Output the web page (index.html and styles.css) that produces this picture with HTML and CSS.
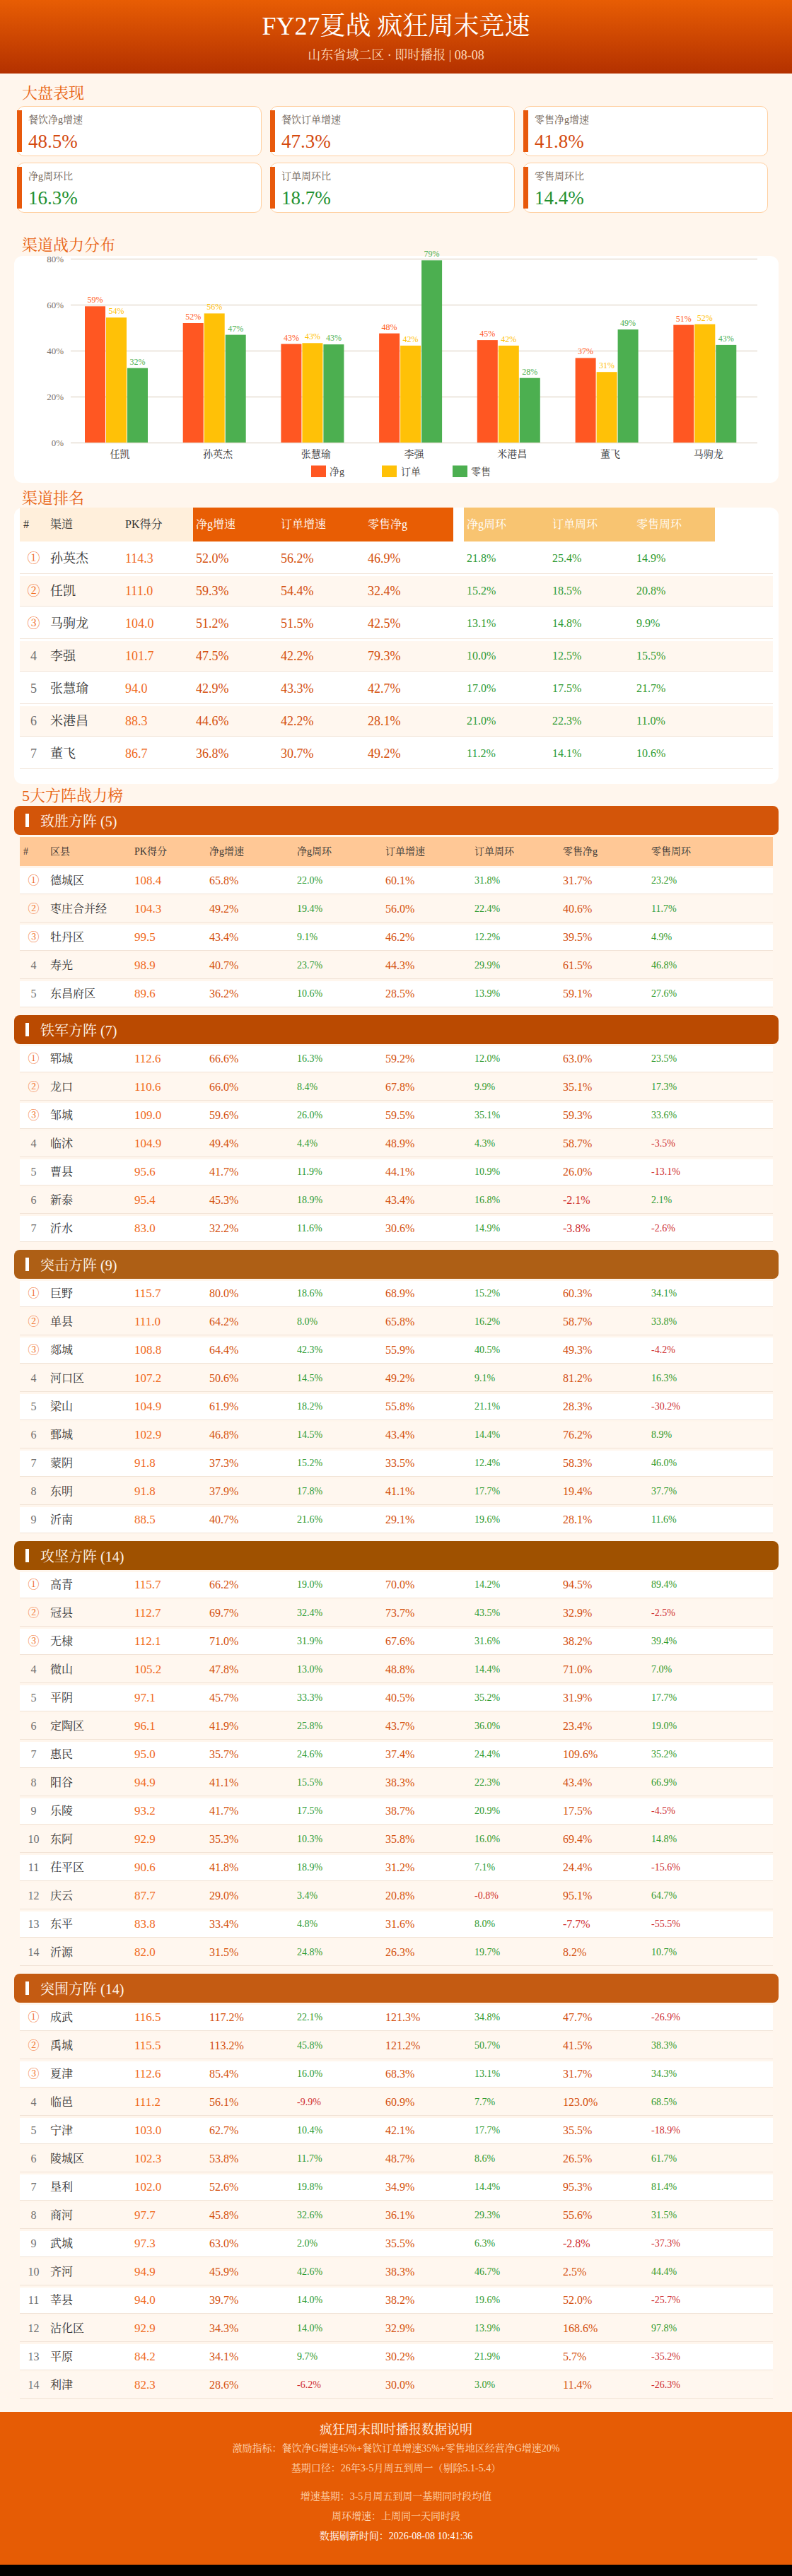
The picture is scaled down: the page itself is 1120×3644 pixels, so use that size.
FILE: index.html
```html
<!DOCTYPE html>
<html lang="zh-CN">
<head>
<meta charset="utf-8">
<title>FY27夏战 疯狂周末竞速</title>
<link rel="stylesheet" href="styles.css">
</head>
<body>
<header class="hero">
  <h1 class="hero-title">FY27夏战 疯狂周末竞速</h1>
  <p class="hero-sub">山东省域二区 · 即时播报 | 08-08</p>
</header>

<main class="page">
  <section class="overview">
    <h2 class="section-title">大盘表现</h2>
    <div class="stats">
      <div class="stat"><span class="stat-bar"></span><div class="stat-body"><div class="stat-label">餐饮净g增速</div><div class="stat-value">48.5%</div></div></div>
      <div class="stat"><span class="stat-bar"></span><div class="stat-body"><div class="stat-label">餐饮订单增速</div><div class="stat-value">47.3%</div></div></div>
      <div class="stat"><span class="stat-bar"></span><div class="stat-body"><div class="stat-label">零售净g增速</div><div class="stat-value">41.8%</div></div></div>
      <div class="stat"><span class="stat-bar"></span><div class="stat-body"><div class="stat-label">净g周环比</div><div class="stat-value is-green">16.3%</div></div></div>
      <div class="stat"><span class="stat-bar"></span><div class="stat-body"><div class="stat-label">订单周环比</div><div class="stat-value is-green">18.7%</div></div></div>
      <div class="stat"><span class="stat-bar"></span><div class="stat-body"><div class="stat-label">零售周环比</div><div class="stat-value is-green">14.4%</div></div></div>
    </div>
  </section>

  <section class="chart-sec">
    <h2 class="section-title">渠道战力分布</h2>
    <div class="chart-card">
      <svg class="chart-svg" width="1081" height="321" viewBox="0 0 1081 321">
        <g class="grid">
          <line x1="80" x2="1051" y1="4.5" y2="4.5"/>
          <line x1="80" x2="1051" y1="69.5" y2="69.5"/>
          <line x1="80" x2="1051" y1="134.5" y2="134.5"/>
          <line x1="80" x2="1051" y1="199.5" y2="199.5"/>
          <line x1="80" x2="1051" y1="264.5" y2="264.5"/>
        </g>
        <g class="ylab">
          <text x="70" y="9">80%</text>
          <text x="70" y="74">60%</text>
          <text x="70" y="139">40%</text>
          <text x="70" y="204">20%</text>
          <text x="70" y="269">0%</text>
        </g>
        <g class="bar-r">
          <rect x="100" y="71.3" width="29" height="192.7"/>
          <rect x="238.7" y="95" width="29" height="169"/>
          <rect x="377.4" y="124.6" width="29" height="139.4"/>
          <rect x="516.1" y="109.6" width="29" height="154.4"/>
          <rect x="654.8" y="119.1" width="29" height="144.9"/>
          <rect x="793.6" y="144.4" width="29" height="119.6"/>
          <rect x="932.3" y="97.6" width="29" height="166.4"/>
        </g>
        <g class="bar-y">
          <rect x="130" y="87.2" width="29" height="176.8"/>
          <rect x="268.7" y="81.4" width="29" height="182.6"/>
          <rect x="407.4" y="123.3" width="29" height="140.7"/>
          <rect x="546.1" y="126.9" width="29" height="137.1"/>
          <rect x="684.8" y="126.9" width="29" height="137.1"/>
          <rect x="823.6" y="164.2" width="29" height="99.8"/>
          <rect x="962.3" y="96.6" width="29" height="167.4"/>
        </g>
        <g class="bar-g">
          <rect x="160" y="158.7" width="29" height="105.3"/>
          <rect x="298.7" y="111.6" width="29" height="152.4"/>
          <rect x="437.4" y="125.2" width="29" height="138.8"/>
          <rect x="576.1" y="6.3" width="29" height="257.7"/>
          <rect x="714.8" y="172.7" width="29" height="91.3"/>
          <rect x="853.6" y="104.1" width="29" height="159.9"/>
          <rect x="992.3" y="125.9" width="29" height="138.1"/>
        </g>
        <g class="vlab vlab-r">
          <text x="114.5" y="66.3">59%</text>
          <text x="253.2" y="90">52%</text>
          <text x="391.9" y="119.6">43%</text>
          <text x="530.6" y="104.6">48%</text>
          <text x="669.3" y="114.1">45%</text>
          <text x="808.1" y="139.4">37%</text>
          <text x="946.8" y="92.6">51%</text>
        </g>
        <g class="vlab vlab-y">
          <text x="144.5" y="82.2">54%</text>
          <text x="283.2" y="76.4">56%</text>
          <text x="421.9" y="118.3">43%</text>
          <text x="560.6" y="121.9">42%</text>
          <text x="699.3" y="121.9">42%</text>
          <text x="838.1" y="159.2">31%</text>
          <text x="976.8" y="91.6">52%</text>
        </g>
        <g class="vlab vlab-g">
          <text x="174.5" y="153.7">32%</text>
          <text x="313.2" y="106.6">47%</text>
          <text x="451.9" y="120.2">43%</text>
          <text x="590.6" y="1.3">79%</text>
          <text x="729.3" y="167.7">28%</text>
          <text x="868.1" y="99.1">49%</text>
          <text x="1006.8" y="120.9">43%</text>
        </g>
        <g class="xlab">
          <text x="149.4" y="285">任凯</text>
          <text x="288.1" y="285">孙英杰</text>
          <text x="426.8" y="285">张慧瑜</text>
          <text x="565.5" y="285">李强</text>
          <text x="704.2" y="285">米港昌</text>
          <text x="843" y="285">董飞</text>
          <text x="981.7" y="285">马驹龙</text>
        </g>
        <g class="legend">
          <rect class="bar-r" x="420" y="296.5" width="21" height="16.5"/>
          <text x="446" y="310">净g</text>
          <rect class="bar-y" x="520" y="296.5" width="21" height="16.5"/>
          <text x="547" y="310">订单</text>
          <rect class="bar-g" x="620" y="296.5" width="21" height="16.5"/>
          <text x="646" y="310">零售</text>
        </g>
      </svg>
    </div>
  </section>

  <section class="rank-sec">
    <h2 class="section-title">渠道排名</h2>
    <div class="rank-card">
      <table class="rank-table">
        <colgroup>
          <col class="rc-rk"><col class="rc-nm"><col class="rc-pk"><col class="rc-g1"><col class="rc-g2"><col class="rc-g3"><col class="rc-sp"><col class="rc-w1"><col class="rc-w2"><col class="rc-w3"><col>
        </colgroup>
        <thead>
          <tr>
            <th class="h-base h-rk">#</th><th class="h-base">渠道</th><th class="h-base">PK得分</th>
            <th class="h-grow">净g增速</th><th class="h-grow">订单增速</th><th class="h-grow">零售净g</th>
            <th></th>
            <th class="h-week">净g周环</th><th class="h-week">订单周环</th><th class="h-week">零售周环</th>
            <th></th>
          </tr>
        </thead>
        <tbody>
          <tr><td class="rk top">①</td><td class="nm">孙英杰</td><td class="pk">114.3</td><td class="g">52.0%</td><td class="g">56.2%</td><td class="g">46.9%</td><td></td><td class="w">21.8%</td><td class="w">25.4%</td><td class="w">14.9%</td><td></td></tr>
          <tr><td class="rk top">②</td><td class="nm">任凯</td><td class="pk">111.0</td><td class="g">59.3%</td><td class="g">54.4%</td><td class="g">32.4%</td><td></td><td class="w">15.2%</td><td class="w">18.5%</td><td class="w">20.8%</td><td></td></tr>
          <tr><td class="rk top">③</td><td class="nm">马驹龙</td><td class="pk">104.0</td><td class="g">51.2%</td><td class="g">51.5%</td><td class="g">42.5%</td><td></td><td class="w">13.1%</td><td class="w">14.8%</td><td class="w">9.9%</td><td></td></tr>
          <tr><td class="rk">4</td><td class="nm">李强</td><td class="pk">101.7</td><td class="g">47.5%</td><td class="g">42.2%</td><td class="g">79.3%</td><td></td><td class="w">10.0%</td><td class="w">12.5%</td><td class="w">15.5%</td><td></td></tr>
          <tr><td class="rk">5</td><td class="nm">张慧瑜</td><td class="pk">94.0</td><td class="g">42.9%</td><td class="g">43.3%</td><td class="g">42.7%</td><td></td><td class="w">17.0%</td><td class="w">17.5%</td><td class="w">21.7%</td><td></td></tr>
          <tr><td class="rk">6</td><td class="nm">米港昌</td><td class="pk">88.3</td><td class="g">44.6%</td><td class="g">42.2%</td><td class="g">28.1%</td><td></td><td class="w">21.0%</td><td class="w">22.3%</td><td class="w">11.0%</td><td></td></tr>
          <tr><td class="rk">7</td><td class="nm">董飞</td><td class="pk">86.7</td><td class="g">36.8%</td><td class="g">30.7%</td><td class="g">49.2%</td><td></td><td class="w">11.2%</td><td class="w">14.1%</td><td class="w">10.6%</td><td></td></tr>
        </tbody>
      </table>
    </div>
  </section>

  <section class="groups-sec">
    <h2 class="section-title">5大方阵战力榜</h2>

    <div class="grp">
      <div class="grp-head grp--win"><span class="grp-mark"></span><span class="grp-name">致胜方阵 (5)</span></div>
      <table class="grp-table">
        <colgroup><col class="gc-rk"><col class="gc-nm"><col class="gc-pk"><col class="gc-v1"><col class="gc-v2"><col class="gc-v3"><col class="gc-v4"><col class="gc-v5"><col></colgroup>
        <thead>
          <tr><th class="h-rk">#</th><th>区县</th><th>PK得分</th><th>净g增速</th><th>净g周环</th><th>订单增速</th><th>订单周环</th><th>零售净g</th><th>零售周环</th></tr>
        </thead>
        <tbody>
          <tr><td class="rk top">①</td><td class="nm">德城区</td><td class="pk">108.4</td><td class="g">65.8%</td><td class="w">22.0%</td><td class="g">60.1%</td><td class="w">31.8%</td><td class="g">31.7%</td><td class="w">23.2%</td></tr>
          <tr><td class="rk top">②</td><td class="nm">枣庄合并经</td><td class="pk">104.3</td><td class="g">49.2%</td><td class="w">19.4%</td><td class="g">56.0%</td><td class="w">22.4%</td><td class="g">40.6%</td><td class="w">11.7%</td></tr>
          <tr><td class="rk top">③</td><td class="nm">牡丹区</td><td class="pk">99.5</td><td class="g">43.4%</td><td class="w">9.1%</td><td class="g">46.2%</td><td class="w">12.2%</td><td class="g">39.5%</td><td class="w">4.9%</td></tr>
          <tr><td class="rk">4</td><td class="nm">寿光</td><td class="pk">98.9</td><td class="g">40.7%</td><td class="w">23.7%</td><td class="g">44.3%</td><td class="w">29.9%</td><td class="g">61.5%</td><td class="w">46.8%</td></tr>
          <tr><td class="rk">5</td><td class="nm">东昌府区</td><td class="pk">89.6</td><td class="g">36.2%</td><td class="w">10.6%</td><td class="g">28.5%</td><td class="w">13.9%</td><td class="g">59.1%</td><td class="w">27.6%</td></tr>
        </tbody>
      </table>
    </div>

    <div class="grp">
      <div class="grp-head grp--iron"><span class="grp-mark"></span><span class="grp-name">铁军方阵 (7)</span></div>
      <table class="grp-table">
        <colgroup><col class="gc-rk"><col class="gc-nm"><col class="gc-pk"><col class="gc-v1"><col class="gc-v2"><col class="gc-v3"><col class="gc-v4"><col class="gc-v5"><col></colgroup>
        <tbody>
          <tr><td class="rk top">①</td><td class="nm">郓城</td><td class="pk">112.6</td><td class="g">66.6%</td><td class="w">16.3%</td><td class="g">59.2%</td><td class="w">12.0%</td><td class="g">63.0%</td><td class="w">23.5%</td></tr>
          <tr><td class="rk top">②</td><td class="nm">龙口</td><td class="pk">110.6</td><td class="g">66.0%</td><td class="w">8.4%</td><td class="g">67.8%</td><td class="w">9.9%</td><td class="g">35.1%</td><td class="w">17.3%</td></tr>
          <tr><td class="rk top">③</td><td class="nm">邹城</td><td class="pk">109.0</td><td class="g">59.6%</td><td class="w">26.0%</td><td class="g">59.5%</td><td class="w">35.1%</td><td class="g">59.3%</td><td class="w">33.6%</td></tr>
          <tr><td class="rk">4</td><td class="nm">临沭</td><td class="pk">104.9</td><td class="g">49.4%</td><td class="w">4.4%</td><td class="g">48.9%</td><td class="w">4.3%</td><td class="g">58.7%</td><td class="w neg">-3.5%</td></tr>
          <tr><td class="rk">5</td><td class="nm">曹县</td><td class="pk">95.6</td><td class="g">41.7%</td><td class="w">11.9%</td><td class="g">44.1%</td><td class="w">10.9%</td><td class="g">26.0%</td><td class="w neg">-13.1%</td></tr>
          <tr><td class="rk">6</td><td class="nm">新泰</td><td class="pk">95.4</td><td class="g">45.3%</td><td class="w">18.9%</td><td class="g">43.4%</td><td class="w">16.8%</td><td class="g neg">-2.1%</td><td class="w">2.1%</td></tr>
          <tr><td class="rk">7</td><td class="nm">沂水</td><td class="pk">83.0</td><td class="g">32.2%</td><td class="w">11.6%</td><td class="g">30.6%</td><td class="w">14.9%</td><td class="g neg">-3.8%</td><td class="w neg">-2.6%</td></tr>
        </tbody>
      </table>
    </div>

    <div class="grp">
      <div class="grp-head grp--rush"><span class="grp-mark"></span><span class="grp-name">突击方阵 (9)</span></div>
      <table class="grp-table">
        <colgroup><col class="gc-rk"><col class="gc-nm"><col class="gc-pk"><col class="gc-v1"><col class="gc-v2"><col class="gc-v3"><col class="gc-v4"><col class="gc-v5"><col></colgroup>
        <tbody>
          <tr><td class="rk top">①</td><td class="nm">巨野</td><td class="pk">115.7</td><td class="g">80.0%</td><td class="w">18.6%</td><td class="g">68.9%</td><td class="w">15.2%</td><td class="g">60.3%</td><td class="w">34.1%</td></tr>
          <tr><td class="rk top">②</td><td class="nm">单县</td><td class="pk">111.0</td><td class="g">64.2%</td><td class="w">8.0%</td><td class="g">65.8%</td><td class="w">16.2%</td><td class="g">58.7%</td><td class="w">33.8%</td></tr>
          <tr><td class="rk top">③</td><td class="nm">郯城</td><td class="pk">108.8</td><td class="g">64.4%</td><td class="w">42.3%</td><td class="g">55.9%</td><td class="w">40.5%</td><td class="g">49.3%</td><td class="w neg">-4.2%</td></tr>
          <tr><td class="rk">4</td><td class="nm">河口区</td><td class="pk">107.2</td><td class="g">50.6%</td><td class="w">14.5%</td><td class="g">49.2%</td><td class="w">9.1%</td><td class="g">81.2%</td><td class="w">16.3%</td></tr>
          <tr><td class="rk">5</td><td class="nm">梁山</td><td class="pk">104.9</td><td class="g">61.9%</td><td class="w">18.2%</td><td class="g">55.8%</td><td class="w">21.1%</td><td class="g">28.3%</td><td class="w neg">-30.2%</td></tr>
          <tr><td class="rk">6</td><td class="nm">鄄城</td><td class="pk">102.9</td><td class="g">46.8%</td><td class="w">14.5%</td><td class="g">43.4%</td><td class="w">14.4%</td><td class="g">76.2%</td><td class="w">8.9%</td></tr>
          <tr><td class="rk">7</td><td class="nm">蒙阴</td><td class="pk">91.8</td><td class="g">37.3%</td><td class="w">15.2%</td><td class="g">33.5%</td><td class="w">12.4%</td><td class="g">58.3%</td><td class="w">46.0%</td></tr>
          <tr><td class="rk">8</td><td class="nm">东明</td><td class="pk">91.8</td><td class="g">37.9%</td><td class="w">17.8%</td><td class="g">41.1%</td><td class="w">17.7%</td><td class="g">19.4%</td><td class="w">37.7%</td></tr>
          <tr><td class="rk">9</td><td class="nm">沂南</td><td class="pk">88.5</td><td class="g">40.7%</td><td class="w">21.6%</td><td class="g">29.1%</td><td class="w">19.6%</td><td class="g">28.1%</td><td class="w">11.6%</td></tr>
        </tbody>
      </table>
    </div>

    <div class="grp">
      <div class="grp-head grp--storm"><span class="grp-mark"></span><span class="grp-name">攻坚方阵 (14)</span></div>
      <table class="grp-table">
        <colgroup><col class="gc-rk"><col class="gc-nm"><col class="gc-pk"><col class="gc-v1"><col class="gc-v2"><col class="gc-v3"><col class="gc-v4"><col class="gc-v5"><col></colgroup>
        <tbody>
          <tr><td class="rk top">①</td><td class="nm">高青</td><td class="pk">115.7</td><td class="g">66.2%</td><td class="w">19.0%</td><td class="g">70.0%</td><td class="w">14.2%</td><td class="g">94.5%</td><td class="w">89.4%</td></tr>
          <tr><td class="rk top">②</td><td class="nm">冠县</td><td class="pk">112.7</td><td class="g">69.7%</td><td class="w">32.4%</td><td class="g">73.7%</td><td class="w">43.5%</td><td class="g">32.9%</td><td class="w neg">-2.5%</td></tr>
          <tr><td class="rk top">③</td><td class="nm">无棣</td><td class="pk">112.1</td><td class="g">71.0%</td><td class="w">31.9%</td><td class="g">67.6%</td><td class="w">31.6%</td><td class="g">38.2%</td><td class="w">39.4%</td></tr>
          <tr><td class="rk">4</td><td class="nm">微山</td><td class="pk">105.2</td><td class="g">47.8%</td><td class="w">13.0%</td><td class="g">48.8%</td><td class="w">14.4%</td><td class="g">71.0%</td><td class="w">7.0%</td></tr>
          <tr><td class="rk">5</td><td class="nm">平阴</td><td class="pk">97.1</td><td class="g">45.7%</td><td class="w">33.3%</td><td class="g">40.5%</td><td class="w">35.2%</td><td class="g">31.9%</td><td class="w">17.7%</td></tr>
          <tr><td class="rk">6</td><td class="nm">定陶区</td><td class="pk">96.1</td><td class="g">41.9%</td><td class="w">25.8%</td><td class="g">43.7%</td><td class="w">36.0%</td><td class="g">23.4%</td><td class="w">19.0%</td></tr>
          <tr><td class="rk">7</td><td class="nm">惠民</td><td class="pk">95.0</td><td class="g">35.7%</td><td class="w">24.6%</td><td class="g">37.4%</td><td class="w">24.4%</td><td class="g">109.6%</td><td class="w">35.2%</td></tr>
          <tr><td class="rk">8</td><td class="nm">阳谷</td><td class="pk">94.9</td><td class="g">41.1%</td><td class="w">15.5%</td><td class="g">38.3%</td><td class="w">22.3%</td><td class="g">43.4%</td><td class="w">66.9%</td></tr>
          <tr><td class="rk">9</td><td class="nm">乐陵</td><td class="pk">93.2</td><td class="g">41.7%</td><td class="w">17.5%</td><td class="g">38.7%</td><td class="w">20.9%</td><td class="g">17.5%</td><td class="w neg">-4.5%</td></tr>
          <tr><td class="rk">10</td><td class="nm">东阿</td><td class="pk">92.9</td><td class="g">35.3%</td><td class="w">10.3%</td><td class="g">35.8%</td><td class="w">16.0%</td><td class="g">69.4%</td><td class="w">14.8%</td></tr>
          <tr><td class="rk">11</td><td class="nm">茌平区</td><td class="pk">90.6</td><td class="g">41.8%</td><td class="w">18.9%</td><td class="g">31.2%</td><td class="w">7.1%</td><td class="g">24.4%</td><td class="w neg">-15.6%</td></tr>
          <tr><td class="rk">12</td><td class="nm">庆云</td><td class="pk">87.7</td><td class="g">29.0%</td><td class="w">3.4%</td><td class="g">20.8%</td><td class="w neg">-0.8%</td><td class="g">95.1%</td><td class="w">64.7%</td></tr>
          <tr><td class="rk">13</td><td class="nm">东平</td><td class="pk">83.8</td><td class="g">33.4%</td><td class="w">4.8%</td><td class="g">31.6%</td><td class="w">8.0%</td><td class="g neg">-7.7%</td><td class="w neg">-55.5%</td></tr>
          <tr><td class="rk">14</td><td class="nm">沂源</td><td class="pk">82.0</td><td class="g">31.5%</td><td class="w">24.8%</td><td class="g">26.3%</td><td class="w">19.7%</td><td class="g">8.2%</td><td class="w">10.7%</td></tr>
        </tbody>
      </table>
    </div>

    <div class="grp">
      <div class="grp-head grp--break"><span class="grp-mark"></span><span class="grp-name">突围方阵 (14)</span></div>
      <table class="grp-table">
        <colgroup><col class="gc-rk"><col class="gc-nm"><col class="gc-pk"><col class="gc-v1"><col class="gc-v2"><col class="gc-v3"><col class="gc-v4"><col class="gc-v5"><col></colgroup>
        <tbody>
          <tr><td class="rk top">①</td><td class="nm">成武</td><td class="pk">116.5</td><td class="g">117.2%</td><td class="w">22.1%</td><td class="g">121.3%</td><td class="w">34.8%</td><td class="g">47.7%</td><td class="w neg">-26.9%</td></tr>
          <tr><td class="rk top">②</td><td class="nm">禹城</td><td class="pk">115.5</td><td class="g">113.2%</td><td class="w">45.8%</td><td class="g">121.2%</td><td class="w">50.7%</td><td class="g">41.5%</td><td class="w">38.3%</td></tr>
          <tr><td class="rk top">③</td><td class="nm">夏津</td><td class="pk">112.6</td><td class="g">85.4%</td><td class="w">16.0%</td><td class="g">68.3%</td><td class="w">13.1%</td><td class="g">31.7%</td><td class="w">34.3%</td></tr>
          <tr><td class="rk">4</td><td class="nm">临邑</td><td class="pk">111.2</td><td class="g">56.1%</td><td class="w neg">-9.9%</td><td class="g">60.9%</td><td class="w">7.7%</td><td class="g">123.0%</td><td class="w">68.5%</td></tr>
          <tr><td class="rk">5</td><td class="nm">宁津</td><td class="pk">103.0</td><td class="g">62.7%</td><td class="w">10.4%</td><td class="g">42.1%</td><td class="w">17.7%</td><td class="g">35.5%</td><td class="w neg">-18.9%</td></tr>
          <tr><td class="rk">6</td><td class="nm">陵城区</td><td class="pk">102.3</td><td class="g">53.8%</td><td class="w">11.7%</td><td class="g">48.7%</td><td class="w">8.6%</td><td class="g">26.5%</td><td class="w">61.7%</td></tr>
          <tr><td class="rk">7</td><td class="nm">垦利</td><td class="pk">102.0</td><td class="g">52.6%</td><td class="w">19.8%</td><td class="g">34.9%</td><td class="w">14.4%</td><td class="g">95.3%</td><td class="w">81.4%</td></tr>
          <tr><td class="rk">8</td><td class="nm">商河</td><td class="pk">97.7</td><td class="g">45.8%</td><td class="w">32.6%</td><td class="g">36.1%</td><td class="w">29.3%</td><td class="g">55.6%</td><td class="w">31.5%</td></tr>
          <tr><td class="rk">9</td><td class="nm">武城</td><td class="pk">97.3</td><td class="g">63.0%</td><td class="w">2.0%</td><td class="g">35.5%</td><td class="w">6.3%</td><td class="g neg">-2.8%</td><td class="w neg">-37.3%</td></tr>
          <tr><td class="rk">10</td><td class="nm">齐河</td><td class="pk">94.9</td><td class="g">45.9%</td><td class="w">42.6%</td><td class="g">38.3%</td><td class="w">46.7%</td><td class="g">2.5%</td><td class="w">44.4%</td></tr>
          <tr><td class="rk">11</td><td class="nm">莘县</td><td class="pk">94.0</td><td class="g">39.7%</td><td class="w">14.0%</td><td class="g">38.2%</td><td class="w">19.6%</td><td class="g">52.0%</td><td class="w neg">-25.7%</td></tr>
          <tr><td class="rk">12</td><td class="nm">沾化区</td><td class="pk">92.9</td><td class="g">34.3%</td><td class="w">14.0%</td><td class="g">32.9%</td><td class="w">13.9%</td><td class="g">168.6%</td><td class="w">97.8%</td></tr>
          <tr><td class="rk">13</td><td class="nm">平原</td><td class="pk">84.2</td><td class="g">34.1%</td><td class="w">9.7%</td><td class="g">30.2%</td><td class="w">21.9%</td><td class="g">5.7%</td><td class="w neg">-35.2%</td></tr>
          <tr><td class="rk">14</td><td class="nm">利津</td><td class="pk">82.3</td><td class="g">28.6%</td><td class="w neg">-6.2%</td><td class="g">30.0%</td><td class="w">3.0%</td><td class="g">11.4%</td><td class="w neg">-26.3%</td></tr>
        </tbody>
      </table>
    </div>
  </section>
</main>

<footer class="foot">
  <h3 class="foot-title">疯狂周末即时播报数据说明</h3>
  <p class="foot-line">激励指标：餐饮净G增速45%+餐饮订单增速35%+零售地区经营净G增速20%</p>
  <p class="foot-line">基期口径：26年3-5月周五到周一（剔除5.1-5.4）</p>
  <p class="foot-line foot-gap">增速基期：3-5月周五到周一基期同时段均值</p>
  <p class="foot-line">周环增速：上周同一天同时段</p>
  <p class="foot-line foot-time">数据刷新时间：2026-08-08 10:41:36</p>
</footer>
</body>
</html>
```

FILE: styles.css
```css
html {
  background: #000;
}

body {
  margin: 0;
  background: #fff6ed;
  color: #333;
  font-family: "Liberation Serif", "Noto Serif CJK SC", "Noto Serif SC", "Noto Sans CJK SC", serif;
}

/* ---------- hero ---------- */
.hero {
  height: 104px;
  box-sizing: border-box;
  padding-top: 17px;
  background: linear-gradient(180deg, #e85d04 0%, #b43100 100%);
  text-align: center;
}

.hero-title {
  margin: 0;
  font-size: 36px;
  line-height: 40px;
  font-weight: normal;
  color: #fff;
}

.hero-sub {
  margin: 9px 0 0;
  font-size: 18px;
  line-height: 24px;
  color: #ffdcbc;
}

/* ---------- page ---------- */
.page {
  padding: 0 19px 8px 20px;
}

.section-title {
  margin: 0;
  padding-left: 11px;
  font-size: 22px;
  line-height: 24px;
  font-weight: normal;
  color: #e8620f;
}

/* ---------- overview ---------- */
.overview {
  padding-top: 16px;
}

.overview .section-title {
  margin-bottom: 6px;
}

.stats {
  display: grid;
  grid-template-columns: repeat(3, 346px);
  column-gap: 12px;
  row-gap: 9px;
  margin-left: 4px;
}

.stat {
  display: flex;
  background: #fff;
  border: 1px solid #ffcf9f;
  border-radius: 10px;
  padding: 5px 0;
}

.stat-bar {
  flex: none;
  width: 7px;
  margin-left: -1px;
  background: #e8590c;
}

.stat-body {
  padding: 4px 9px 0;
}

.stat-label {
  font-size: 14px;
  line-height: 20px;
  color: #6d5d52;
}

.stat-value {
  margin-top: 5px;
  font-size: 27px;
  line-height: 30px;
  color: #d4490f;
}

.stat-value.is-green {
  color: #22902f;
}

/* ---------- chart ---------- */
.chart-sec {
  padding-top: 34px;
}

.chart-sec .section-title {
  margin-bottom: 3px;
}

.chart-card {
  height: 321px;
  background: #fff;
  border-radius: 12px;
}

.chart-svg {
  display: block;
  overflow: visible;
}

.grid line {
  stroke: #e6ddd3;
  stroke-width: 1.3;
}

.ylab text {
  font-size: 13px;
  fill: #7d6f64;
  text-anchor: end;
}

.bar-r, .bar-r rect { fill: #ff5722; }
.bar-y, .bar-y rect { fill: #ffc107; }
.bar-g, .bar-g rect { fill: #4caf50; }

.vlab text {
  font-size: 12px;
  text-anchor: middle;
}

.vlab-r text { fill: #ff5722; }
.vlab-y text { fill: #ffc107; }
.vlab-g text { fill: #4caf50; }

.xlab text {
  font-size: 14px;
  fill: #333;
  text-anchor: middle;
}

.legend text {
  font-size: 14px;
  fill: #444;
}

/* ---------- ranking ---------- */
.rank-sec {
  padding-top: 10px;
}

.rank-sec .section-title {
  margin-bottom: 1px;
}

.rank-card {
  display: flow-root;
  background: #fff;
  border-radius: 12px;
  padding: 0 8px 18px;
}

.rank-table,
.grp-table {
  width: 1065px;
  table-layout: fixed;
  border-collapse: separate;
  border-spacing: 0 3px;
}

.rank-table {
  margin-top: -3px;
}

.rc-rk { width: 39px; }
.rc-nm { width: 106px; }
.rc-pk { width: 100px; }
.rc-g1 { width: 120px; }
.rc-g2 { width: 123px; }
.rc-g3 { width: 125px; }
.rc-sp { width: 15px; }
.rc-w1 { width: 121px; }
.rc-w2 { width: 119px; }
.rc-w3 { width: 115px; }

.rank-table th {
  padding: 0 4px;
  line-height: 48px;
  font-size: 16px;
  font-weight: normal;
  text-align: left;
  white-space: nowrap;
}

.rank-table th.h-rk,
.grp-table th.h-rk {
  padding-left: 5px;
}

.h-base { background: #ffefdb; color: #333; }
.h-grow { background: #e85d04; color: #fff; }
.h-week { background: #f8c471; color: #fff; }

.rank-table td,
.grp-table td {
  padding: 0 4px;
  border-bottom: 1px solid #f1e3d6;
  white-space: nowrap;
}

.rank-table td {
  line-height: 42px;
  font-size: 18px;
}

.rank-table tbody tr:nth-child(even) td,
.grp-table tbody tr:nth-child(even) td {
  background: #fff7ef;
}

.rank-table tbody tr:nth-child(odd) td,
.grp-table tbody tr:nth-child(odd) td {
  background: #fff;
}

.rk {
  text-align: center;
  color: #707070;
}

.rk.top {
  color: #f06a1c;
}

.nm { color: #333; }
.pk { color: #f06a1c; }
.g { color: #d4500e; }
.w { color: #2e9b32; }
.neg { color: #cf2e2e; }

.rank-table td.w {
  font-size: 16px;
}

/* ---------- groups ---------- */
.groups-sec {
  padding-top: 5px;
}

.groups-sec .section-title {
  margin-bottom: 2px;
}

.grp {
  margin-bottom: 8px;
}

.grp-head {
  display: flex;
  align-items: center;
  gap: 16px;
  height: 41px;
  padding-left: 16px;
  border-radius: 8px;
  color: #fff7f0;
  font-size: 20px;
}

.grp-mark {
  flex: none;
  width: 5px;
  height: 19px;
  background: #fff;
}

.grp--win { background: #d35509; }
.grp--iron { background: #ba4a01; }
.grp--rush { background: #ae5f15; }
.grp--storm { background: #9f5100; }
.grp--break { background: #c45b12; }

.grp-table {
  margin-left: 8px;
}

.gc-rk { width: 39px; }
.gc-nm { width: 119px; }
.gc-pk { width: 106px; }
.gc-v1 { width: 124px; }
.gc-v2 { width: 125px; }
.gc-v3 { width: 126px; }
.gc-v4 { width: 125px; }
.gc-v5 { width: 125px; }

.grp-table th {
  padding: 0 4px;
  line-height: 41px;
  background: #ffc896;
  color: #333;
  font-size: 14px;
  font-weight: normal;
  text-align: left;
  white-space: nowrap;
}

.grp-table td {
  line-height: 36px;
  font-size: 16px;
}

.grp-table td.pk {
  font-size: 17px;
}

.grp-table td.w {
  font-size: 14px;
}

/* ---------- footer ---------- */
.foot {
  padding: 12px 0 26px;
  background: #e65c05;
  text-align: center;
}

.foot-title {
  margin: 0;
  font-size: 18px;
  line-height: 26px;
  font-weight: normal;
  color: #fff4ea;
}

.foot-line {
  margin: 0;
  font-size: 14px;
  line-height: 28px;
  color: #ffd7b3;
}

.foot-gap {
  margin-top: 12px;
}

.foot-time {
  color: #fff;
}
```
